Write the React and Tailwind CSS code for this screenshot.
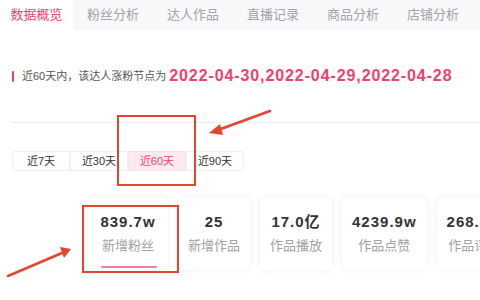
const tabs = ["数据概览", "粉丝分析", "达人作品", "直播记录", "商品分析", "店铺分析"]
const ranges = ["近7天", "近30天", "近60天", "近90天"]
const stats = [
  { value: "839.7w", label: "新增粉丝", active: true },
  { value: "25", label: "新增作品" },
  { value: "17.0亿", label: "作品播放" },
  { value: "4239.9w", label: "作品点赞" },
  { value: "268.5w", label: "作品评论" },
]

const App = () => {
  return (
    <div className="relative w-[480px] h-[300px] overflow-hidden bg-white font-['Liberation_Sans','Noto_Sans_CJK_SC',sans-serif]">
      {/* tabs */}
      <div className="flex h-[30px] bg-[#f7f8fa]">
        {tabs.map((t, i) => (
          <div
            key={t}
            className={
              i === 0
                ? "w-[73px] flex items-center justify-center bg-white text-[13px] text-[#f0416c]"
                : "w-[80px] flex items-center justify-center text-[13px] text-[#a3a3a8]"
            }
          >
            {t}
          </div>
        ))}
      </div>

      {/* rising nodes */}
      <div className="mt-[36px] flex items-center h-[20px] pl-[12px]">
        <div className="w-[2px] h-[11px] bg-[#f0416c] rounded-sm" />
        <span className="ml-[8px] text-[11px] text-[#555]">近60天内，该达人涨粉节点为</span>
        <span className="ml-[3px] text-[16px] font-bold tracking-[0.9px] text-[#f0416c]">
          2022-04-30,2022-04-29,2022-04-28
        </span>
      </div>

      <div className="mt-[36px] ml-[12px] h-px bg-[#ededed]" />

      {/* range buttons */}
      <div className="mt-[28px] ml-[12px] flex">
        {ranges.map((r) => (
          <div
            key={r}
            className={
              r === "近60天"
                ? "w-[58px] h-[20px] flex items-center justify-center border border-[#fbe3ea] bg-[#fde9ef] text-[11px] text-[#f0416c]"
                : "w-[58px] h-[20px] flex items-center justify-center border border-[#f6eef0] text-[11px] text-[#333]"
            }
          >
            {r}
          </div>
        ))}
      </div>

      {/* stat cards */}
      <div className="mt-[26px] ml-[88px] flex gap-[10px]">
        {stats.map((s, i) => (
          <div
            key={s.label}
            className={
              "relative shrink-0 h-[73px] px-[10px] flex flex-col items-center justify-center rounded-md bg-white shadow-[0_0_6px_rgba(0,0,0,0.07)]" +
              (i === 0 ? " w-[80px]" : "")
            }
          >
            <div className="text-[15px] font-bold tracking-[1px] text-[#333] leading-[18px]">{s.value}</div>
            <div className="mt-[7px] text-[13px] text-[#a0a0a6] leading-[16px]">{s.label}</div>
            {s.active && <div className="absolute bottom-[2px] left-[13px] right-[11px] h-[2px] bg-[#f47ba0] rounded" />}
          </div>
        ))}
      </div>

      {/* annotations */}
      <div className="absolute left-[117px] top-[115px] w-[79px] h-[71px] border-2 border-[#e8432e]" />
      <div className="absolute left-[82px] top-[205px] w-[97px] h-[68px] border-2 border-[#e8432e]" />
      <svg className="absolute left-0 top-0" width="480" height="300">
        <line x1="270" y1="111" x2="218" y2="130" stroke="#e8432e" strokeWidth="2.5" strokeLinecap="round" />
        <polygon points="209,133 220,124 223,135" fill="#e8432e" />
        <line x1="8" y1="276" x2="62" y2="253" stroke="#e8432e" strokeWidth="2.5" strokeLinecap="round" />
        <polygon points="71,249 60,247 64,258" fill="#e8432e" />
      </svg>
    </div>
  )
}

export default App
